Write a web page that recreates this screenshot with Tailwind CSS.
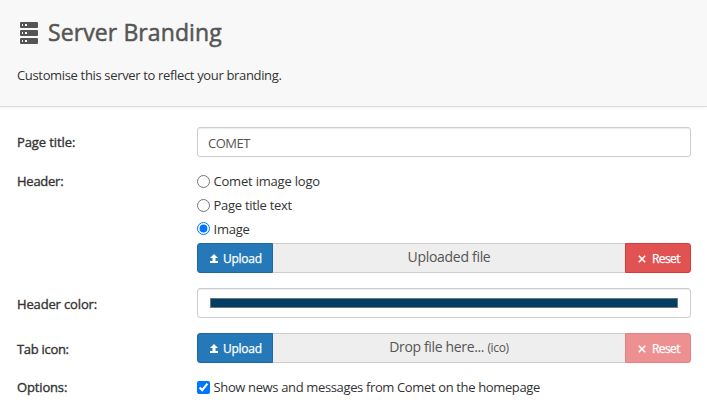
<!DOCTYPE html>
<html lang="en">
<head>
<meta charset="utf-8">
<title>Server Branding</title>
<script src="https://cdn.jsdelivr.net/npm/@tailwindcss/browser@4"></script>
</head>
<body class="h-[417px] overflow-hidden bg-white font-['Open_Sans',sans-serif] text-[13px] leading-5 text-[#333]">
<svg class="hidden">
  <symbol id="up" viewBox="0 0 10 10"><path d="M5 0L9 4H6.5V7H3.5V4H1ZM1 7H9V9H1Z" fill="currentColor"/></symbol>
  <symbol id="x" viewBox="0 0 8 8"><path d="M.8.8L7.2 7.2M7.2.8L.8 7.2" fill="none" stroke="currentColor" stroke-width="1.6"/></symbol>
</svg>
<header class="h-[107px] border-b border-[#dcdcdc] bg-[#f8f8f8] pl-[17px] pt-[17px] shadow-[0_1px_3px_rgba(0,0,0,0.06)]">
  <h1 class="flex h-8 items-center text-[23px] leading-8 tracking-[0.1px] text-[#555] [-webkit-text-stroke:0.5px_#555]">
    <svg class="ml-[3px] mr-[10px] h-[22px] w-[18px]" viewBox="0 0 18 22"><g fill="#555"><rect width="18" height="6" rx="1"/><rect y="8" width="18" height="6" rx="1"/><rect y="16" width="18" height="6" rx="1"/></g><path d="M2 2h1v2H2zM5 2h2v2H5zM2 10h1v2H2zM5 10h2v2H5zM2 18h1v2H2zM5 18h2v2H5z" fill="#f8f8f8"/></svg>
    <span class="relative -top-px">Server Branding</span>
  </h1>
  <p class="mt-4 tracking-[-0.34px]">Customise this server to reflect your branding.</p>
</header>
<main class="pl-[17px] pr-4 pt-5">
  <div class="grid h-[30px] grid-cols-[180px_1fr]">
    <label class="pt-[5px] tracking-[-0.1px] [-webkit-text-stroke:0.35px_#333]">Page title:</label>
    <div class="rounded-[3px] border border-[#ccc] pl-[10px] pt-[5px] tracking-[-0.5px] text-[#555] shadow-[inset_0_1px_1px_rgba(0,0,0,0.075)]">COMET</div>
  </div>
  <div class="mt-[14px] grid h-[102px] grid-cols-[180px_1fr]">
    <label class="tracking-[-0.25px] [-webkit-text-stroke:0.35px_#333]">Header:</label>
    <div class="flex flex-col">
      <label class="flex h-[24px] gap-[3.5px] tracking-[-0.2px]"><input type="radio" name="h" class="mt-[4px] size-[13px]"><span>Comet image logo</span></label>
      <label class="flex h-[24px] gap-[3.5px] tracking-[-0.28px]"><input type="radio" name="h" class="mt-[4px] size-[13px]"><span>Page title text</span></label>
      <label class="flex h-[24px] gap-[3.5px] tracking-[-0.25px]"><input type="radio" name="h" checked class="mt-[3px] size-[13px]"><span>Image</span></label>
      <div class="flex h-[30px]">
        <div class="flex w-[76px] items-center rounded-l-[3px] border border-[#2069a0] bg-[#2579b8] pl-[11px] pt-px text-[12px] tracking-[-0.25px] text-white [-webkit-text-stroke:0.25px_white]"><svg class="mr-[4px] size-[10px]"><use href="#up"/></svg>Upload</div>
        <div class="flex-1 border-y border-[#ccc] bg-[#eee] pt-[3px] text-center text-[14px] tracking-[-0.3px] text-[#555]">Uploaded file</div>
        <div class="flex w-[66px] items-center rounded-r-[3px] border border-[#d9393a] bg-[#e15253] pl-[12px] pt-px text-[12px] tracking-[-0.6px] text-white [-webkit-text-stroke:0.25px_white]"><svg class="mr-[6px] size-2"><use href="#x"/></svg>Reset</div>
      </div>
    </div>
  </div>
  <div class="mt-[15px] grid h-[30px] grid-cols-[180px_1fr]">
    <label class="pt-[6px] tracking-[-0.15px] [-webkit-text-stroke:0.35px_#333]">Header color:</label>
    <div class="rounded-[3px] border border-[#ccc] px-3 py-[9px] shadow-[inset_0_1px_1px_rgba(0,0,0,0.075)]"><div class="h-[10px] border border-[#777] bg-[#003e66]"></div></div>
  </div>
  <div class="mt-[15px] grid h-[30px] grid-cols-[180px_1fr]">
    <label class="pt-[6px] tracking-[-0.3px] [-webkit-text-stroke:0.35px_#333]">Tab icon:</label>
    <div class="flex h-[30px]">
      <div class="flex w-[76px] items-center rounded-l-[3px] border border-[#2069a0] bg-[#2579b8] pl-[11px] pt-px text-[12px] tracking-[-0.25px] text-white [-webkit-text-stroke:0.25px_white]"><svg class="mr-[4px] size-[10px]"><use href="#up"/></svg>Upload</div>
      <div class="flex-1 border-y border-[#ccc] bg-[#eee] pt-[3px] text-center text-[14px] tracking-[-0.35px] text-[#555]">Drop file here... <span class="text-[12px]">(ico)</span></div>
      <div class="flex w-[66px] items-center rounded-r-[3px] border border-[#e58080] bg-[#ec9091] pl-[12px] pt-px text-[12px] tracking-[-0.6px] text-white [-webkit-text-stroke:0.25px_white]"><svg class="mr-[6px] size-2"><use href="#x"/></svg>Reset</div>
    </div>
  </div>
  <div class="mt-[14px] grid grid-cols-[180px_1fr]">
    <label class="tracking-[-0.15px] [-webkit-text-stroke:0.35px_#333]">Options:</label>
    <label class="flex gap-[3.5px] tracking-[-0.36px]"><input type="checkbox" checked class="mt-[4px] size-[13px]"><span>Show news and messages from Comet on the homepage</span></label>
  </div>
</main>
</body>
</html>
